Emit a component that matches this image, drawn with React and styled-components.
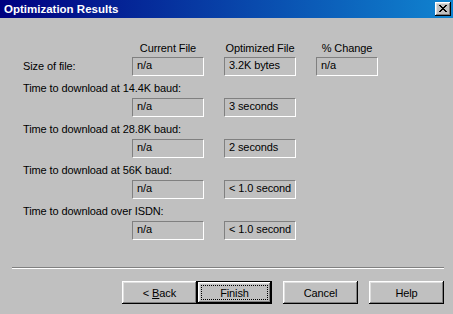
import React from "react";
import styled, { createGlobalStyle, css } from "styled-components";

const GlobalStyle = createGlobalStyle`
  html, body {
    margin: 0;
    padding: 0;
    background: #c0c0c0;
  }
  body {
    font-family: "Liberation Sans", Arial, sans-serif;
    font-size: 11px;
    letter-spacing: -0.1px;
    color: #000;
  }
`;

const Window = styled.div`
  width: 453px;
  height: 314px;
  background: #c0c0c0;
  display: flex;
  flex-direction: column;
  overflow: hidden;
`;

const TitleBar = styled.div`
  height: 18px;
  flex: none;
  box-sizing: border-box;
  padding: 0 2px 0 4px;
  display: flex;
  align-items: center;
  justify-content: space-between;
  background: linear-gradient(90deg, #000080 0%, #1084d0 100%);
`;

const Title = styled.span`
  color: #fff;
  font-weight: bold;
  font-size: 11.5px;
  letter-spacing: 0;
  line-height: 18px;
  white-space: nowrap;
`;

const CloseButton = styled.div`
  width: 16px;
  height: 14px;
  box-sizing: border-box;
  background: #c0c0c0;
  display: flex;
  align-items: center;
  justify-content: center;
  padding: 0 1px 1px 0;
  box-shadow: inset -1px -1px #000, inset 1px 1px #fff, inset -2px -2px #808080,
    inset 2px 2px #dfdfdf;
`;

const Body = styled.div`
  padding: 24px 9px 0 12px;
  display: flex;
  flex-direction: column;
`;

const Results = styled.div`
  display: flex;
  flex-direction: column;
  padding-left: 11px;
`;

const columns = css`
  display: grid;
  grid-template-columns: 89px 72px 72px 62px;
  column-gap: 20px;
`;

const HeaderRow = styled.div`
  ${columns};
  line-height: 13px;
  margin-bottom: 2px;
`;

const HeaderCell = styled.div`
  text-align: center;
  white-space: nowrap;
`;

const DataRow = styled.div`
  ${columns};
  align-items: center;
  margin-top: ${(p) => p.$offset || 0}px;
`;

const RowLabel = styled.div`
  line-height: 13px;
  white-space: nowrap;
`;

const SpeedGroup = styled.div`
  margin-top: 6px;
  display: flex;
  flex-direction: column;
`;

const ValueBox = styled.div`
  height: 19px;
  box-sizing: border-box;
  border-top: 1px solid #808080;
  border-left: 1px solid #808080;
  border-bottom: 1px solid #fff;
  border-right: 1px solid #fff;
  padding: 0 4px 2px;
  line-height: 15px;
  white-space: nowrap;
  overflow: hidden;
`;

const Separator = styled.div`
  margin-top: 27px;
  border-top: 1px solid #808080;
  border-bottom: 1px solid #fff;
`;

const ButtonBar = styled.div`
  margin-top: 12px;
  display: flex;
  justify-content: flex-end;
  gap: 11px;
`;

const NavGroup = styled.div`
  display: flex;
`;

const Button = styled.button`
  position: relative;
  width: 75px;
  height: 23px;
  box-sizing: border-box;
  padding: 0;
  margin: 0;
  font: inherit;
  letter-spacing: inherit;
  color: #000;
  background: #c0c0c0;
  border: none;
  box-shadow: inset -1px -1px #000, inset 1px 1px #fff, inset -2px -2px #808080,
    inset 2px 2px #dfdfdf;
  ${(p) =>
    p.$default &&
    css`
      border: 1px solid #000;
      &::after {
        content: "";
        position: absolute;
        inset: 3px;
        border: 1px dotted #000;
      }
    `}
`;

const Underline = styled.span`
  text-decoration: underline;
`;

const CloseIcon = () => (
  <svg width="8" height="7" viewBox="0 0 8 7" shapeRendering="crispEdges">
    <path
      fill="#000"
      d="M0 0h2v1H0zM6 0h2v1H6zM1 1h2v1H1zM5 1h2v1H5zM2 2h4v1H2zM3 3h2v1H3zM2 4h4v1H2zM1 5h2v1H1zM5 5h2v1H5zM0 6h2v1H0zM6 6h2v1H6z"
    />
  </svg>
);

const speeds = [
  { label: "Time to download at 14.4K baud:", current: "n/a", optimized: "3 seconds" },
  { label: "Time to download at 28.8K baud:", current: "n/a", optimized: "2 seconds" },
  { label: "Time to download at 56K baud:", current: "n/a", optimized: "< 1.0 second" },
  { label: "Time to download over ISDN:", current: "n/a", optimized: "< 1.0 second" },
];

export default function App() {
  return (
    <>
      <GlobalStyle />
      <Window>
        <TitleBar>
          <Title>Optimization Results</Title>
          <CloseButton>
            <CloseIcon />
          </CloseButton>
        </TitleBar>
        <Body>
          <Results>
            <HeaderRow>
              <div />
              <HeaderCell>Current File</HeaderCell>
              <HeaderCell>Optimized File</HeaderCell>
              <HeaderCell>% Change</HeaderCell>
            </HeaderRow>
            <DataRow>
              <RowLabel>Size of file:</RowLabel>
              <ValueBox>n/a</ValueBox>
              <ValueBox>3.2K bytes</ValueBox>
              <ValueBox>n/a</ValueBox>
            </DataRow>
            {speeds.map((s) => (
              <SpeedGroup key={s.label}>
                <RowLabel>{s.label}</RowLabel>
                <DataRow $offset={3}>
                  <div />
                  <ValueBox>{s.current}</ValueBox>
                  <ValueBox>{s.optimized}</ValueBox>
                </DataRow>
              </SpeedGroup>
            ))}
          </Results>
          <Separator />
          <ButtonBar>
            <NavGroup>
              <Button>
                &lt; <Underline>B</Underline>ack
              </Button>
              <Button $default>Finish</Button>
            </NavGroup>
            <Button>Cancel</Button>
            <Button>Help</Button>
          </ButtonBar>
        </Body>
      </Window>
    </>
  );
}
